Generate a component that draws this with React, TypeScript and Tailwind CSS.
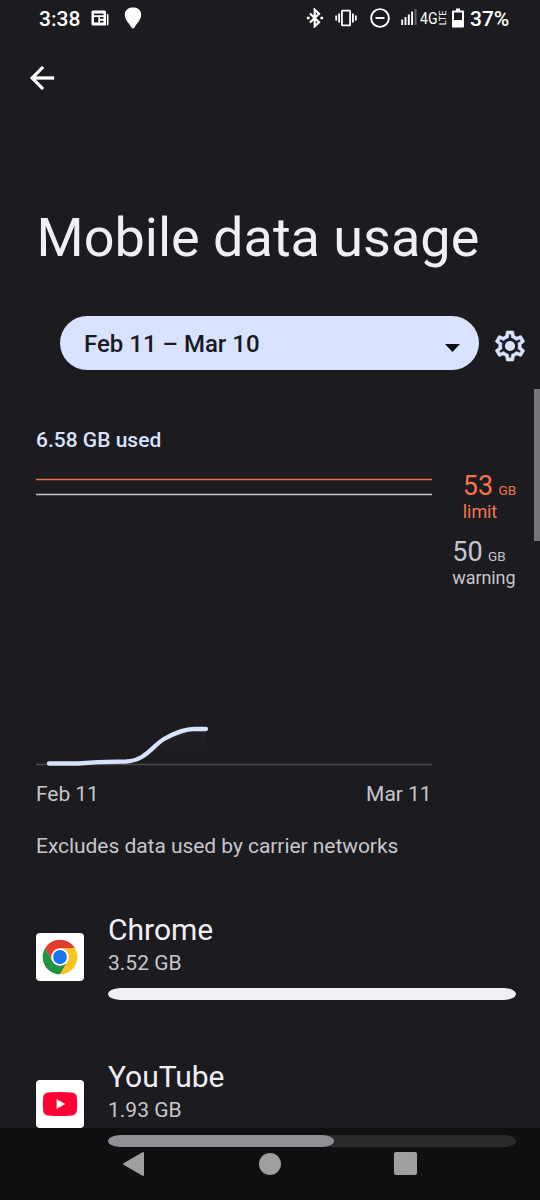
import React from 'react';

interface AppUsage {
  name: string;
  amount: string;
  percent: number;
  icon: React.ReactNode;
}

const ChromeIcon: React.FC = () => (
  <svg viewBox="0 0 48 48" className="w-full h-full">
    <path d="M9.02 15.35A17.3 17.3 0 0 1 38.98 15.35H24V24L16.5 28.3Z" fill="#e33b2e" />
    <path d="M24 15.35H38.98A17.3 17.3 0 0 1 24 41.3L31.5 28.3L24 24Z" fill="#fcc31e" />
    <path d="M9.02 15.35A17.3 17.3 0 0 0 24 41.3L31.5 28.3L24 24L16.5 28.3Z" fill="#229342" />
    <circle cx="24" cy="24" r="8.8" fill="#fff" />
    <circle cx="24" cy="24" r="6.9" fill="#1a73e8" />
  </svg>
);

const YouTubeIcon: React.FC = () => (
  <svg viewBox="0 0 48 48" className="w-full h-full">
    <path
      d="M12 12.6 Q24 11.4 36 12.6 Q40.3 13 40.8 17 Q41.7 24 40.8 31 Q40.3 35 36 35.4 Q24 36.6 12 35.4 Q7.7 35 7.2 31 Q6.3 24 7.2 17 Q7.7 13 12 12.6 Z"
      fill="#ff0033"
    />
    <path d="M20.6 19 L29.2 24 L20.6 29 Z" fill="#fff" />
  </svg>
);

const apps: AppUsage[] = [
  { name: 'Chrome', amount: '3.52 GB', percent: 100, icon: <ChromeIcon /> },
  { name: 'YouTube', amount: '1.93 GB', percent: 55.5, icon: <YouTubeIcon /> },
];

const StatusBar: React.FC = () => (
  <div className="h-9 flex items-center pl-[39px] pr-[30px] text-white font-medium text-[21px] leading-9">
    <span className="w-[41px] pt-[2px]">3:38</span>
    <svg viewBox="0 0 18 16" className="w-[18px] h-4 ml-[11px]" fill="#fff">
      <path
        fillRule="evenodd"
        d="M2 .5h11.500a1.500 1.500 0 0 1 1.500 1.500v13.500H2A1.500 1.500 0 0 1 .5 14V2A1.500 1.500 0 0 1 2 .5zM3 3.500v1.800h9.500V3.500zM3 7v5.500h4.300V7zM9 7v1.800h3.500V7zM9 10.700v1.800h3.500v-1.800z"
      />
      <path d="M15.900 4h.600a1 1 0 0 1 1 1v9a1.500 1.500 0 0 1-1.500 1.500h-.100z" />
    </svg>
    <svg viewBox="0 0 18 22" className="w-[18px] h-[22px] ml-[15px]" fill="#fff">
      <path d="M9 .5C14 .5 17.200 3 17.200 8c0 5-4.700 8.500-6.700 12.500q-1.500 2-3 0C5.500 16.500 .8 13 .8 8 .8 3 4 .5 9 .5z" />
    </svg>

    <div className="ml-auto flex items-center">
      <svg viewBox="0 0 18 20" className="w-[18px] h-5" fill="none" stroke="#fff" strokeWidth="2.200">
        <path d="M4 5.500l9 8.800-4.300 4V1.700l4.300 4-9 8.800" />
        <path d="M.9 10h2.700M14.400 10h2.700" strokeWidth="2.400" />
      </svg>
      <svg viewBox="0 0 22 18" className="w-[22px] h-[18px] ml-[11px]" fill="none" stroke="#fff" strokeWidth="1.800">
        <rect x="6.900" y="1.600" width="8.200" height="14.800" rx=".6" />
        <path d="M1.200 6.500v5M4.100 4.500v9M17.900 4.500v9M20.800 6.500v5" />
      </svg>
      <svg viewBox="0 0 20 20" className="w-5 h-5 ml-[13px]" fill="none" stroke="#fff" strokeWidth="1.900">
        <circle cx="10" cy="10" r="8.900" />
        <path d="M5.500 10h9" />
      </svg>
      <svg viewBox="0 0 16 18" className="w-4 h-[18px] ml-[11px]" stroke="#fff" strokeWidth="1.900">
        <path d="M1.200 16v-5.500M4.500 16V8M7.800 16V5.500M11.100 16V2.500" />
        <path d="M14.600 16V0" stroke="#66656a" />
      </svg>
      <span className="ml-[3px] w-[18px] inline-flex">
        <span className="text-[17px] font-normal scale-x-[0.83] origin-left">4G</span>
      </span>
      <span className="w-2 h-4 flex items-center justify-center">
        <span className="-rotate-90 text-[9.500px] font-normal leading-none">LTE</span>
      </span>
      <svg viewBox="0 0 12 20" className="w-3 h-5 ml-[6px]" fill="#fff">
        <path
          fillRule="evenodd"
          d="M4 .5h4v2h3a1 1 0 0 1 1 1V18.500a1 1 0 0 1-1 1H1a1 1 0 0 1-1-1v-15a1 1 0 0 1 1-1h3zM2 4.500V12h8V4.500z"
        />
      </svg>
      <span className="ml-[6px] w-[40px] pt-[2px]">37%</span>
    </div>
  </div>
);

const PeriodPicker: React.FC = () => (
  <div className="mt-[43px] flex items-center pl-[60px]">
    <div className="w-[419px] h-[54px] rounded-full bg-[#d9e2ff] flex items-center pl-6 pr-[19px]">
      <span className="text-[24px] font-medium text-[#1b1a22] pt-[2px]">Feb 11 – Mar 10</span>
      <svg viewBox="0 0 15 8" className="w-[15px] h-2 ml-auto mt-[10px]">
        <path d="M0 0h15L7.500 8z" fill="#0c0c10" />
      </svg>
    </div>
    <svg viewBox="0 0 24 24" className="w-9 h-9 ml-[13px] mt-[6px]" fill="#d9e2ff">
      <path
        stroke="#d9e2ff"
        strokeWidth=".4"
        d="M19.430 12.980c.040-.320.070-.640.070-.980 0-.340-.030-.660-.070-.980l2.110-1.650c.190-.150.240-.420.120-.640l-2-3.460c-.090-.160-.260-.250-.440-.250-.060 0-.120.010-.170.030l-2.490 1c-.520-.400-1.080-.730-1.690-.980l-.380-2.650C14.460 2.180 14.250 2 14 2h-4c-.250 0-.460.180-.490.420l-.380 2.650c-.610.250-1.170.590-1.690.980l-2.490-1c-.060-.020-.120-.030-.180-.030-.170 0-.340.090-.430.250l-2 3.460c-.130.220-.070.490.120.640l2.110 1.650c-.040.320-.070.650-.070.980 0 .330.030.660.070.980l-2.110 1.650c-.190.150-.240.420-.120.640l2 3.460c.090.160.260.250.440.250.060 0 .120-.010.170-.030l2.490-1c.520.400 1.080.730 1.690.980l.380 2.650c.030.240.240.420.490.420h4c.250 0 .460-.180.490-.420l.380-2.650c.610-.250 1.170-.590 1.690-.980l2.490 1c.060.020.120.030.180.030.170 0 .340-.090.430-.250l2-3.460c.120-.220.070-.490-.120-.640l-2.110-1.650zm-1.980-1.710c.040.310.050.520.050.730 0 .210-.020.430-.050.730l-.140 1.130.890.700 1.080.840-.700 1.210-1.270-.510-1.040-.420-.900.680c-.430.320-.840.560-1.250.730l-1.060.430-.160 1.130-.200 1.350h-1.400l-.190-1.350-.160-1.130-1.060-.430c-.430-.180-.830-.410-1.230-.710l-.910-.700-1.060.430-1.270.510-.700-1.210 1.080-.840.890-.700-.140-1.130c-.030-.310-.050-.540-.050-.740s.020-.430.050-.730l.140-1.130-.890-.700-1.080-.840.700-1.210 1.270.510 1.040.420.900-.680c.430-.320.840-.560 1.250-.730l1.060-.430.160-1.130.200-1.350h1.390l.190 1.350.160 1.130 1.060.430c.430.180.830.410 1.230.710l.910.700 1.060-.430 1.270-.510.700 1.210-1.070.850-.890.700.140 1.130z"
      />
      <circle cx="12" cy="12" r="3.400" />
    </svg>
  </div>
);

const UsageChart: React.FC = () => (
  <div className="mt-[23px] flex">
    <div className="w-[396px]">
      <svg viewBox="0 0 396 290" className="w-[396px] h-[290px] block" fill="none">
        <defs>
          <linearGradient id="fill" x1="0" y1="0" x2="0" y2="1">
            <stop offset="0" stopColor="#d9e2ff" stopOpacity="0.02" />
            <stop offset="1" stopColor="#d9e2ff" stopOpacity="0" />
          </linearGradient>
        </defs>
        <path d="M0 1.500H396" stroke="#ee7048" strokeWidth="1.600" />
        <path d="M0 16.500H396" stroke="#c9c7ce" strokeWidth="1.600" />
        <path d="M0 286.500H396" stroke="#4a494e" strokeWidth="1.400" />
        <path d="M13 286V285.500C60 285 80 283.500 92 283.500C115 283 120 268 132 261Q148 251 162 251H170V286Z" fill="url(#fill)" />
        <path
          d="M13 285.500H42L62 284.200L90 283.500C110 282.500 116 268 128 261Q146 251 158 251H170"
          stroke="#d9e2ff"
          strokeWidth="4.300"
          strokeLinecap="round"
          strokeLinejoin="round"
        />
      </svg>
      <div className="mt-[11px] pr-[0.5px] flex justify-between text-[21px] leading-[30px] tracking-[-0.05px] text-[#c7c5ce]">
        <span>Feb 11</span>
        <span>Mar 11</span>
      </div>
    </div>
    {/* Threshold labels */}
    <div className="ml-auto flex flex-col pr-6 tracking-[-0.1px]">
      <div className="ml-[10.5px] text-[#f4744b]">
        <div className="text-[27px] leading-6 -mt-[4px]">
          53 <span className="text-[13.500px] -ml-[1px]">GB</span>
        </div>
        <div className="text-[18px] leading-[19px]">limit</div>
      </div>
      <div className="mt-[19px] text-[#c7c5ce]">
        <div className="text-[27px] leading-6">
          50 <span className="text-[13.500px] -ml-[1px]">GB</span>
        </div>
        <div className="text-[18px] leading-[19px]">warning</div>
      </div>
    </div>
  </div>
);

const AppRow: React.FC<{ app: AppUsage }> = ({ app }) => (
  <div className="h-[147px] flex items-start pl-9 pr-6">
    <div className="w-12 h-12 mt-[42px] bg-white rounded-[4px] shrink-0">{app.icon}</div>
    <div className="ml-6 flex-1 pt-[21px]">
      <div className="text-[30px] leading-[36px] text-[#f1eff5]">{app.name}</div>
      <div className="text-[21px] leading-[30px] text-[#c7c5ce]">{app.amount}</div>
      <div className="mt-[10px] h-[12.5px] bg-[#48474b] rounded-[12px/6px] overflow-hidden">
        <div className="h-[12.5px] bg-[#f1eff5] rounded-[12px/6px]" style={{ width: `${app.percent}%` }}></div>
      </div>
    </div>
  </div>
);

const NavigationBar: React.FC = () => (
  <div className="absolute inset-x-0 bottom-0 h-[72px] bg-black/40 flex">
    <svg viewBox="0 0 24 26" className="w-6 h-[26px] ml-[121px] mt-[23px]">
      <path d="M3 13L22 2V24Z" fill="#9f9fa1" stroke="#9f9fa1" strokeWidth="2" strokeLinejoin="round" />
    </svg>
    <div className="w-[22px] h-[22px] ml-[114px] mt-[25px] rounded-full bg-[#9f9fa1]"></div>
    <div className="w-[23px] h-[23px] ml-[113px] mt-6 rounded-[2px] bg-[#9f9fa1]"></div>
  </div>
);

const App: React.FC = () => {
  return (
    <div className="relative w-[540px] h-[1200px] overflow-hidden bg-[#1c1b20] font-[Roboto,sans-serif]">
      <StatusBar />
      <div className="h-[84px] pl-6 pt-6">
        <svg viewBox="0 0 24 24" className="w-9 h-9" fill="#fff" stroke="#fff" strokeWidth=".2" strokeLinejoin="round">
          <path d="M20 11H7.830l5.590-5.590L12 4l-8 8 8 8 1.410-1.410L7.830 13H20v-2z" />
        </svg>
      </div>
      <h1 className="mt-[83.4px] pl-[36.5px] text-[54px] leading-[70px] text-[#f1eff5] whitespace-nowrap">
        Mobile data usage
      </h1>
      <PeriodPicker />

      <div className="mt-[54.6px] pl-9">
        <div className="text-[21px] leading-[30px] font-medium text-[#d9e2ff]">6.58 GB used</div>
        <UsageChart />
        <p className="mt-[22px] text-[21px] leading-[30px] tracking-[-0.05px] text-[#c7c5ce]">
          Excludes data used by carrier networks
        </p>
      </div>

      <div className="mt-[30px]">
        {apps.map((app) => (
          <AppRow key={app.name} app={app} />
        ))}
      </div>

      <div className="absolute right-0 top-[389px] w-[6px] h-[152px] bg-[#76757a]"></div>
      <NavigationBar />
    </div>
  );
};

export default App;
